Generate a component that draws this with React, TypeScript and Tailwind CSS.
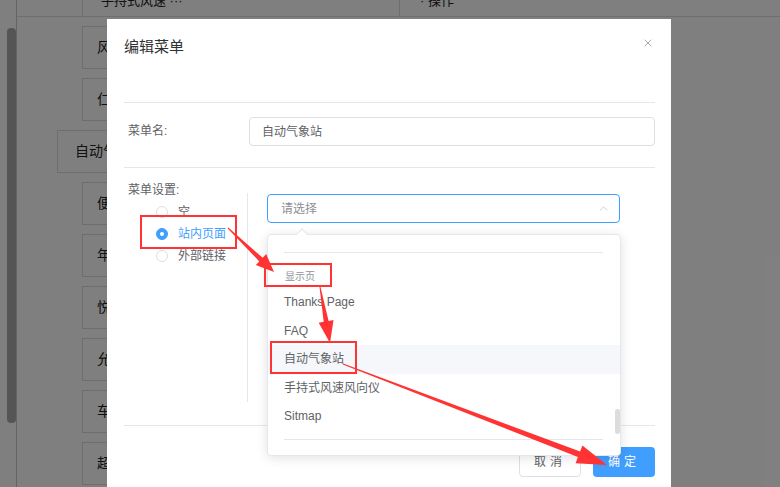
import React from "react";
import { X, ChevronUp } from "lucide-react";

function arrowPoints(
  x1: number,
  y1: number,
  x2: number,
  y2: number,
  tail: number,
  body: number,
  head: number,
  headLen: number
) {
  const dx = x2 - x1;
  const dy = y2 - y1;
  const len = Math.hypot(dx, dy);
  const ux = dx / len;
  const uy = dy / len;
  const nx = -uy;
  const ny = ux;
  const bx = x2 - ux * headLen;
  const by = y2 - uy * headLen;
  const pts: [number, number][] = [
    [x1 + (nx * tail) / 2, y1 + (ny * tail) / 2],
    [bx + (nx * body) / 2, by + (ny * body) / 2],
    [bx + (nx * head) / 2, by + (ny * head) / 2],
    [x2, y2],
    [bx - (nx * head) / 2, by - (ny * head) / 2],
    [bx - (nx * body) / 2, by - (ny * body) / 2],
    [x1 - (nx * tail) / 2, y1 - (ny * tail) / 2],
  ];
  return pts.map((p) => `${p[0].toFixed(1)},${p[1].toFixed(1)}`).join(" ");
}

const bgItems = [
  { t: "风速", wide: false },
  { t: "仁器", wide: false },
  { t: "自动气", wide: true },
  { t: "便携", wide: false },
  { t: "年度", wide: false },
  { t: "悦动", wide: false },
  { t: "允许", wide: false },
  { t: "车载", wide: false },
  { t: "超声", wide: false },
];

function Radio({ label, checked }: { label: string; checked?: boolean }) {
  return (
    <div className="flex h-[22px] items-center gap-[10px]">
      {checked ? (
        <span className="flex h-[12px] w-[12px] items-center justify-center rounded-full border border-[#409eff] bg-[#409eff]">
          <span className="h-[4px] w-[4px] rounded-full bg-white" />
        </span>
      ) : (
        <span className="h-[12px] w-[12px] rounded-full border border-[#dcdfe6] bg-white" />
      )}
      <span className={checked ? "text-[12px] text-[#409eff]" : "text-[12px] text-[#606266]"}>{label}</span>
    </div>
  );
}

export default function App() {
  const font = "font-['Liberation_Sans','Noto_Sans_CJK_SC',sans-serif]";
  const items = ["Thanks Page", "FAQ", "自动气象站", "手持式风速风向仪", "Sitmap"];
  return (
    <div className={`relative h-[487px] w-[780px] overflow-hidden bg-white ${font}`}>
      {/* background page */}
      <div className="flex h-full">
        <div className="w-[17px] shrink-0 border-r border-[#c8c8c8] pl-[7px] pt-[28px]">
          <div className="h-[395px] w-[9px] rounded-[4px] bg-[#ababab]" />
        </div>
        <div className="flex flex-1 flex-col">
          <div className="flex h-[17px] border-b border-[#dcdcdc]">
            <div className="w-[65px]" />
            <div className="relative w-[318px] border-l border-r border-[#dcdcdc]">
              <span className="absolute left-[18px] top-[-9px] text-[13px] text-[#222]">手持式风速 ···</span>
            </div>
            <div className="relative flex-1">
              <span className="absolute left-[20px] top-[-9px] text-[13px] text-[#222]">· 操作</span>
            </div>
          </div>
          <div className="flex flex-col gap-[9px] pt-[9px]">
            {bgItems.map((b) => (
              <div
                key={b.t}
                className={
                  b.wide
                    ? "ml-[40px] flex h-[43px] w-[220px] items-center border border-[#dcdcdc] pl-[17px] text-[14px] text-[#222]"
                    : "ml-[65px] flex h-[43px] w-[200px] items-center border border-[#dcdcdc] pl-[14px] text-[14px] text-[#222]"
                }
              >
                {b.t}
              </div>
            ))}
          </div>
        </div>
      </div>

      {/* overlay */}
      <div className="absolute inset-0 bg-black/50" />

      {/* dialog */}
      <div className="absolute left-[107px] top-[19px] h-[480px] w-[564px] bg-white">
        <div className="relative h-[83px] px-[17px] pt-[17px]">
          <div className="text-[15px] leading-[22px] text-[#303133]">编辑菜单</div>
          <X className="absolute right-[17px] top-[18px] text-[#909399]" size={12} strokeWidth={1.6} />
        </div>
        <div className="ml-[17px] mr-[16px] border-t border-[#e4e7ed]">
          <div className="flex h-[65px] border-b border-[#e4e7ed] pt-[14px]">
            <div className="w-[125px] pl-[4px] text-[12px] leading-[29px] text-[#606266]">菜单名:</div>
            <div className="flex h-[29px] flex-1 items-center rounded-[4px] border border-[#dcdfe6] pl-[12px] text-[12px] text-[#606266]">
              自动气象站
            </div>
          </div>
          <div className="border-b border-[#e4e7ed] pb-[23px] pt-[15px]">
            <div className="pl-[4px] text-[12px] leading-[14px] text-[#606266]">菜单设置:</div>
            <div className="mt-[-4px] flex">
              <div className="h-[209px] w-[124px] border-r border-[#e4e7ed] pl-[32px] pt-[8px]">
                <Radio label="空" />
                <Radio label="站内页面" checked />
                <Radio label="外部链接" />
              </div>
              <div className="pl-[19px] pt-[1px]">
                <div className="flex h-[29px] w-[353px] items-center justify-between rounded-[4px] border border-[#409eff] pl-[13px] pr-[9px]">
                  <span className="text-[12px] text-[#8c8f96]">请选择</span>
                  <ChevronUp size={13} strokeWidth={1.5} className="text-[#c0c4cc]" />
                </div>
              </div>
            </div>
          </div>
          <div className="flex justify-end gap-[12px] pt-[21px]">
            <div className="flex h-[30px] w-[62px] items-center justify-center rounded-[4px] border border-[#dcdfe6] bg-white text-[12px] tracking-[4px] text-[#606266]">
              取消
            </div>
            <div className="flex h-[30px] w-[62px] items-center justify-center rounded-[4px] bg-[#409eff] text-[12px] tracking-[4px] text-white">
              确定
            </div>
          </div>
        </div>
      </div>

      {/* dropdown popper */}
      <div className="absolute left-[267px] top-[234px] h-[222px] w-[354px] rounded-[4px] border border-[#e4e7ed] bg-white shadow-[0_2px_12px_rgba(0,0,0,0.12)]">
        <div className="absolute left-[30px] top-[-5px] h-[8px] w-[8px] rotate-45 border-l border-t border-[#e4e7ed] bg-white" />
        <div className="relative h-full overflow-hidden">
          <div className="ml-[16px] mr-[17px] mt-[17px] border-t border-[#e4e7ed]" />
          <div className="flex h-[35px] items-end pb-[4px] pl-[17px] text-[10px] leading-[14px] text-[#909399]">显示页</div>
          {items.map((it) => (
            <div
              key={it}
              className={
                it === "自动气象站"
                  ? "flex h-[28.5px] items-center bg-[#f5f7fa] pl-[16px] text-[12px] text-[#606266]"
                  : "flex h-[28.5px] items-center pl-[16px] text-[12px] text-[#606266]"
              }
            >
              {it}
            </div>
          ))}
          <div className="ml-[16px] mr-[17px] mt-[8px] border-t border-[#e4e7ed]" />
          <div className="absolute left-[347px] top-[174px] h-[25px] w-[5px] rounded-full bg-[#dcdcdc]" />
        </div>
      </div>

      {/* annotations */}
      <div className="absolute left-[140px] top-[215px] h-[34px] w-[97px] border-2 border-[#f33]" />
      <div className="absolute left-[264px] top-[263px] h-[24px] w-[68px] border-2 border-[#f33]" />
      <div className="absolute left-[270px] top-[341px] h-[33px] w-[87px] border-2 border-[#f33]" />
      <svg className="pointer-events-none absolute inset-0" width={780} height={487}>
        <polygon points={arrowPoints(228, 228, 274, 272, 1, 5, 15, 18)} fill="#f33" />
        <polygon points={arrowPoints(320, 287, 330, 343, 1, 5, 15, 22)} fill="#f33" />
        <polygon points={arrowPoints(343, 364, 607, 465, 1, 6, 19, 30)} fill="#f33" />
      </svg>
    </div>
  );
}
